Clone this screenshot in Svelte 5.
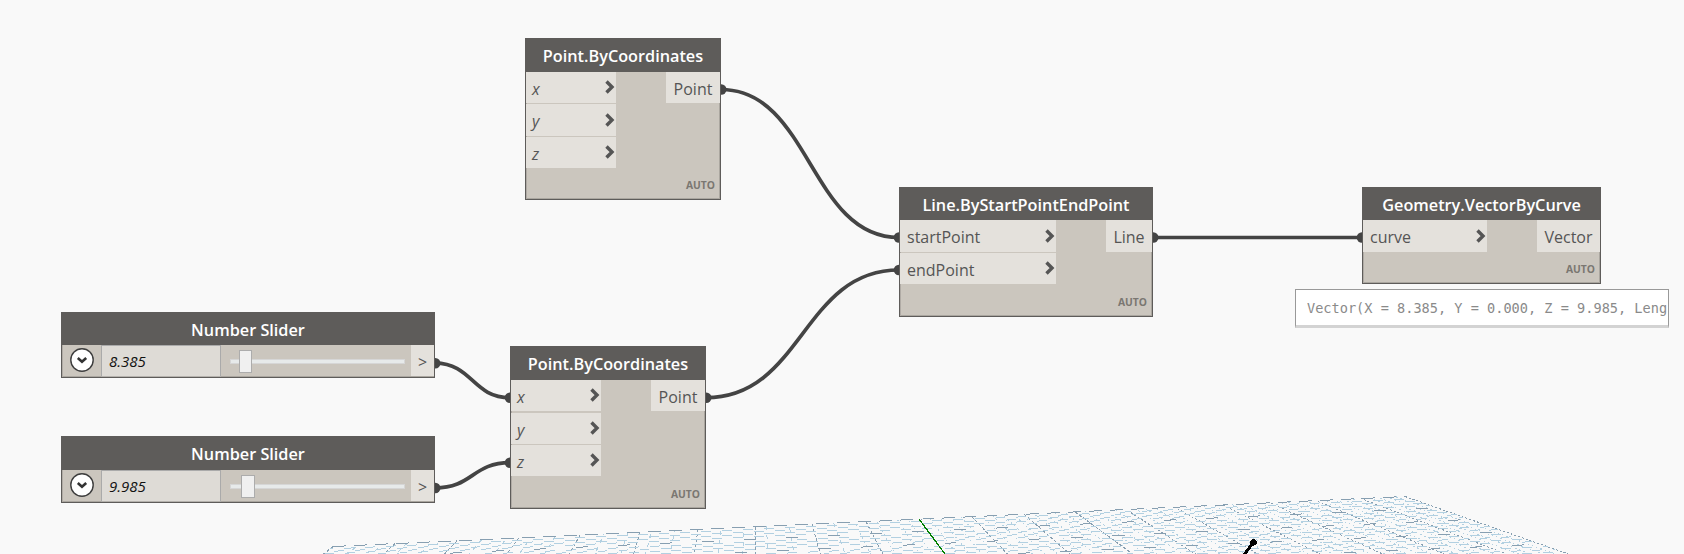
<script>
  const nodes = [
    { title: 'Point.ByCoordinates', x: 525, y: 38, w: 196, h: 162, head: 34, inW: 90, outW: 54, italic: true, out: 'Point',
      inputs: [['x', 31, 1], ['y', 32, 1], ['z', 31, 0]] },
    { title: 'Point.ByCoordinates', x: 510, y: 346, w: 196, h: 163, head: 34, inW: 90, outW: 54, italic: true, out: 'Point',
      inputs: [['x', 31, 2], ['y', 31, 1], ['z', 31, 0]] },
    { title: 'Line.ByStartPointEndPoint', x: 899, y: 187, w: 254, h: 130, head: 33, inW: 156, outW: 46, out: 'Line',
      inputs: [['startPoint', 32, 1], ['endPoint', 31, 0]] },
    { title: 'Geometry.VectorByCurve', x: 1362, y: 187, w: 239, h: 97, head: 33, inW: 124, outW: 63, out: 'Vector',
      inputs: [['curve', 32, 0]] }
  ];
  const sliders = [
    { value: '8.385', y: 312, h: 66, head: 33, thumb: 9, tw: 13 },
    { value: '9.985', y: 436, h: 67, head: 34, thumb: 11, tw: 14 }
  ];
  const wires = [
    [721, 89.5, 899, 237.5], [706, 397.7, 899, 270], [1153, 237.5, 1362, 237.5],
    [435, 363.2, 510, 397.7], [435, 488, 510, 462.7]
  ];
  const curve = ([a, b, c, d]) => {
    const m = (c - a) / 2;
    return `M${a} ${b}C${a + m} ${b} ${c - m} ${d} ${c} ${d}`;
  };

  // Perspective ground grid: major line origins on the far edge, and their x-per-y drift
  const tops = [333, 395, 457, 519, 580, 640, 698, 755, 812, 866, 919, 972, 1024, 1075, 1126, 1175, 1223, 1270, 1316, 1361, 1405];
  const drift = [-1.25, -1.1, -0.95, -0.75, -0.55, -0.3, -0.15, 0, 0.28, 0.52, 0.735, 0.95, 1.16, 1.37, 1.56, 1.77, 1.98, 2.2, 2.4, 2.62, 2.84];
  const slope = -50 / 1072;
  const edgeY = (x) => 546.5 + (x - 333) * slope;
  const rays = [];
  for (let i = 0; i <= 100; i++) {
    const k = Math.floor(i / 5), f = (i % 5) / 5, n = Math.min(k + 1, 20);
    const x = tops[k] + (tops[n] - tops[k]) * f;
    const d = drift[k] + (drift[n] - drift[k]) * f;
    const y = edgeY(x);
    // Minor lines on the near-vertical side are mostly lost to stippling
    if (i % 5 && x < 900 && i % 2) continue;
    rays.push({ x1: x, y1: y, x2: x + d * (556 - y), y2: 556, dark: i % 5 === 0, d, i });
  }
  const rows = [];
  for (let j = 0; j < 27; j++) {
    const o = j * 2.5 + j * j * 0.01;
    const yl = 546.5 + o;
    const xl = 333 - 1.25 * o;
    const t = o / (1 - slope * 2.84);
    rows.push({ x1: xl, y1: yl, x2: 1405 + 2.84 * t, y2: 496.5 + t, dark: j % 5 === 0, j });
  }
</script>

<main>
  <svg class="ground" width="1684" height="554" shape-rendering="crispEdges">
    {#each rays as r}
      {#if r.i !== 50}
        <line x1={r.x1} y1={r.y1} x2={r.x2} y2={r.y2} class:dark={r.dark}
          stroke-dasharray={r.dark ? (r.d > 1.5 ? '2 2' : '3 2') : r.d > 0.4 ? '1.5 3' : '4 5'} stroke-dashoffset={r.i * 3} />
      {/if}
    {/each}
    {#each rows as r}
      <line x1={r.x1} y1={r.y1} x2={r.x2} y2={r.y2} class:dark={r.dark}
        stroke-dasharray={r.j === 0 ? '13 8.02' : r.dark ? '12 9 0 21.04' : '10 11.02'} stroke-dashoffset={r.j * 7} />
    {/each}
    <line class="green" x1="919" y1="519" x2="945" y2="554" />
    <path d="M1243 556L1253 543" stroke="#000" stroke-width="3" />
    <circle cx="1253.5" cy="542.3" r="3.2" fill="#000" />
  </svg>

  <svg class="wires" width="1684" height="554">
    {#each wires as w}
      <path d={curve(w)} />
      <circle cx={w[0] + 0.3} cy={w[1]} r="5.2" />
      <circle cx={w[2] - 0.1} cy={w[3]} r="5.2" />
    {/each}
  </svg>

  {#each nodes as n}
    <section class="node" style="left:{n.x}px;top:{n.y}px;width:{n.w}px;height:{n.h}px">
      <header style="height:{n.head}px">{n.title}</header>
      <div class="body">
        <div class="inputs" style="width:{n.inW}px">
          {#each n.inputs as [name, h, gap]}
            <div class="port" class:italic={n.italic} style="height:{h}px;margin-bottom:{gap}px">
              <span>{name}</span>
              <svg width="10" height="14" viewBox="0 0 10 14"><path d="M1.5 1.5L7 7L1.5 12.5" /></svg>
            </div>
          {/each}
        </div>
        <div class="out" style="width:{n.outW}px;height:{n.inputs[0][1]}px">{n.out}</div>
      </div>
      <footer>AUTO</footer>
    </section>
  {/each}

  {#each sliders as s}
    <section class="node slider" style="top:{s.y}px;height:{s.h}px">
      <header style="height:{s.head}px">Number Slider</header>
      <div class="controls">
        <svg class="toggle" width="26" height="26" viewBox="0 0 26 26">
          <circle cx="13" cy="13" r="11.2" /><path d="M8.8 11L13 14.8L17.2 11" />
        </svg>
        <div class="value">{s.value}</div>
        <div class="range">
          <div class="track"></div>
          <div class="thumb" style="left:{s.thumb}px;width:{s.tw}px"></div>
        </div>
        <div class="next">&gt;</div>
      </div>
    </section>
  {/each}

  <div class="preview"><span>Vector(X = 8.385, Y = 0.000, Z = 9.985, Leng</span></div>
</main>

<style>
  :global(body) { margin: 0; background: #f9f9f9; overflow: hidden; }
  main { position: relative; width: 1684px; height: 554px; overflow: hidden; font-family: "Open Sans", sans-serif; color: #555; background: #f9f9f9; }
  .ground, .wires { position: absolute; inset: 0; }
  .ground line { stroke: #b2d0e1; stroke-width: 1; }
  .ground line.dark { stroke: #879fb1; }
  .ground line.green { stroke: #008000; stroke-width: 1.3; }
  .wires path { fill: none; stroke: #444; stroke-width: 3.7; }
  .wires circle { fill: #444; }
  .node { position: absolute; box-sizing: border-box; background: #cbc6be; border: 1px solid #5e5c5a; border-top: 0; box-shadow: inset 1px 0 #b0aba5, inset -1px -1px #aaa69f; display: flex; flex-direction: column; }
  header { flex: none; margin: 0 -1px; background: #5e5c5a; color: #fff; font-weight: 600; font-size: 16.25px; display: flex; align-items: center; justify-content: center; padding-top: 2px; box-sizing: border-box; white-space: nowrap; }
  .body { display: flex; justify-content: space-between; align-items: flex-start; }
  .port { display: flex; align-items: center; justify-content: space-between; box-sizing: border-box; background: #e4e1dc; padding: 2px 1px 0 7px; font-size: 16px; }
  .italic { font-style: italic; padding-left: 6px; }
  .port svg { margin-top: -3px; }
  .port path { fill: none; stroke: #555; stroke-width: 3.4; }
  .out { box-sizing: border-box; display: flex; align-items: center; justify-content: center; background: #e4e1dc; font-size: 16px; padding-top: 2px; }
  footer { margin-top: auto; padding: 0 5px 8px 0; text-align: right; font-size: 10.3px; line-height: 12px; font-weight: 700; color: #7a7771; }
  .slider { left: 61px; width: 374px; }
  .controls { flex: 1; display: flex; }
  .toggle { margin: 2px 6px 0 7px; flex: none; }
  .toggle circle { fill: #fff; stroke: #3d3d3d; stroke-width: 1.4; }
  .toggle path { fill: none; stroke: #333; stroke-width: 2.6; }
  .value { width: 120px; box-sizing: border-box; border: 1px solid #a9a9a9; border-color: #aaa #aaa #b5b2ad; background: #dedbd6; color: #111; font-size: 15px; font-style: italic; padding-left: 7px; display: flex; align-items: center; }
  .range { position: relative; width: 175px; margin-left: 9px; }
  .track { margin-top: 14px; height: 5px; box-sizing: border-box; background: #e7eaea; border: 1px solid #d6d6d6; }
  .thumb { position: absolute; top: 5px; height: 23px; box-sizing: border-box; background: #f0f0f0; border: 1px solid #acacac; }
  .next { margin: 0 0 1px auto; width: 23px; background: #e4e1dc; display: flex; align-items: center; justify-content: center; font-size: 16px; padding-top: 2px; box-sizing: border-box; }
  .preview { position: absolute; left: 1295px; top: 289px; width: 374px; height: 39px; box-sizing: border-box; background: #fff; border: 1px solid #999; border-bottom: 3px solid #d3d3d3; padding: 0 1px 0 11px; display: flex; align-items: center; }
  .preview span { overflow: hidden; white-space: pre; font: 13.6px "DejaVu Sans Mono", monospace; color: #8a8a8a; }
</style>
